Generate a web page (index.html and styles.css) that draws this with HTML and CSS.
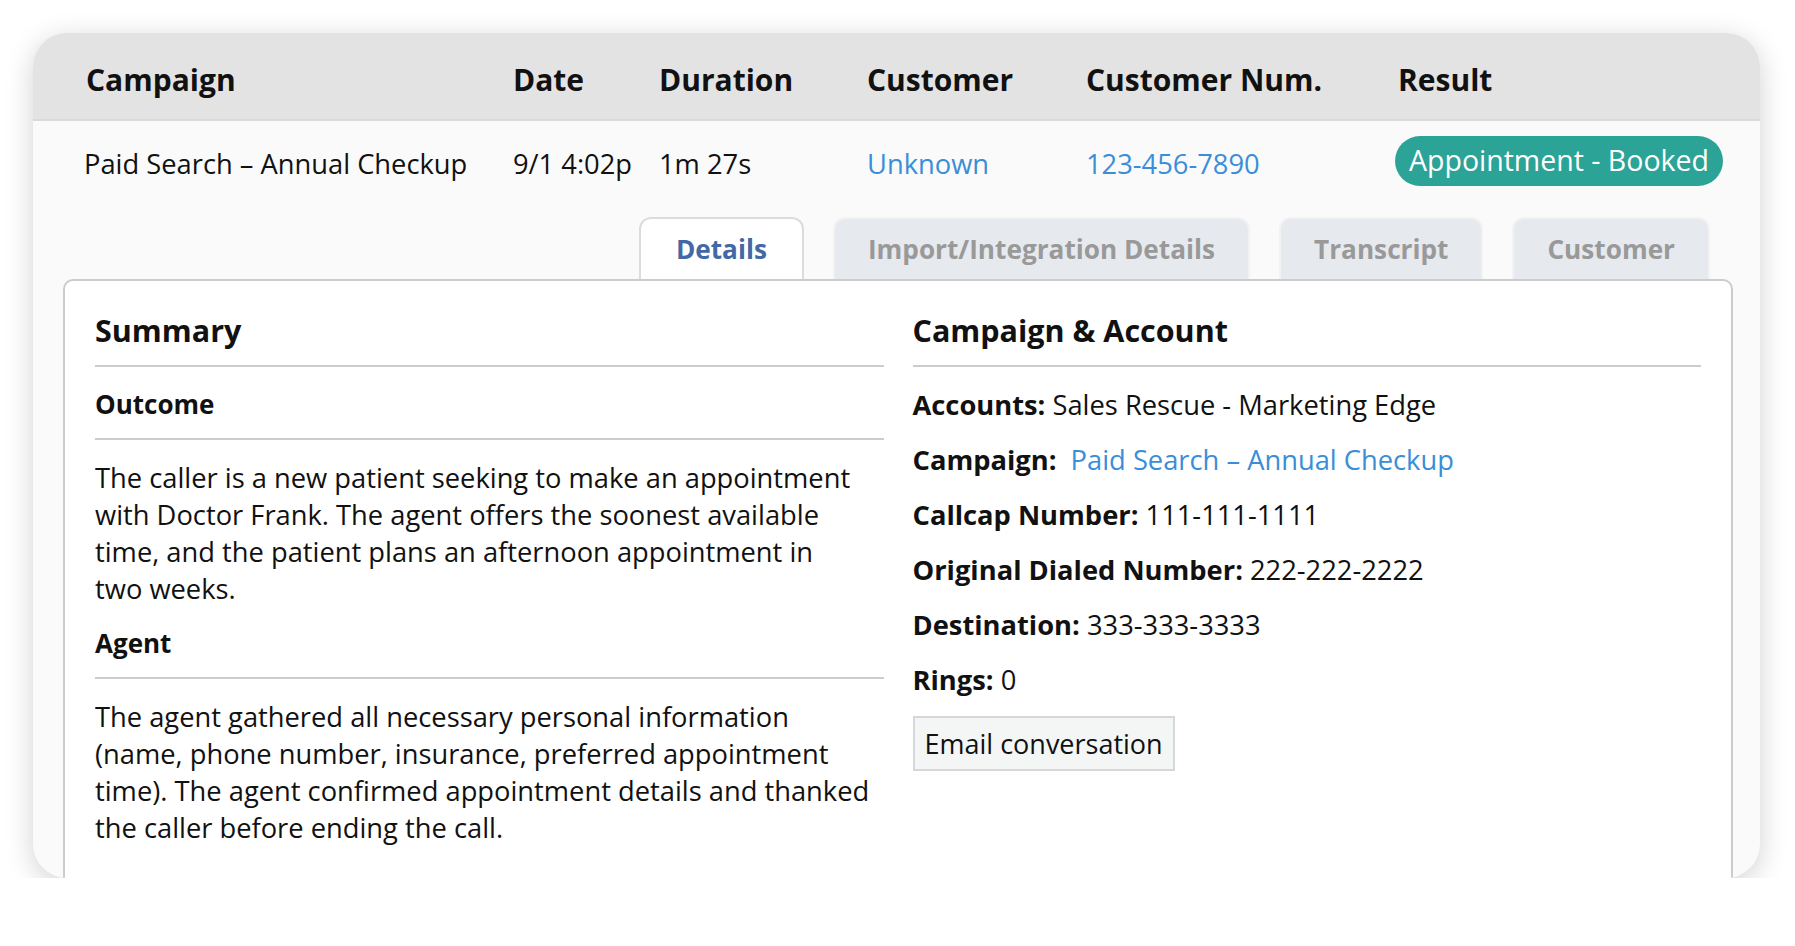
FILE: index.html
```html
<!DOCTYPE html>
<html lang="en">
	<head>
		<meta charset="UTF-8" />
		<meta name="viewport" content="width=device-width, initial-scale=1.0" />
		<title>Call Details</title>
		<link rel="stylesheet" href="styles.css">
	</head>
	<body>
		<div class="call-card">
			<div class="call-grid call-head">
				<div>Campaign</div>
				<div>Date</div>
				<div>Duration</div>
				<div>Customer</div>
				<div>Customer Num.</div>
				<div>Result</div>
			</div>
			<div class="call-grid call-row">
				<div>Paid Search &ndash; Annual Checkup</div>
				<div>9/1 4:02p</div>
				<div>1m 27s</div>
				<div><a href="#" class="call-link">Unknown</a></div>
				<div><a href="#" class="call-link">123-456-7890</a></div>
				<div><span class="result-badge">Appointment - Booked</span></div>
			</div>
			<div class="detail-tabs">
				<button class="detail-tab active-tab" type="button">Details</button>
				<button class="detail-tab" type="button">Import/Integration Details</button>
				<button class="detail-tab" type="button">Transcript</button>
				<button class="detail-tab" type="button">Customer</button>
			</div>
			<div class="detail-panel">
				<div class="detail-col">
					<h2 class="section-title">Summary</h2>
					<h3 class="sub-title">Outcome</h3>
					<p class="summary-text">The caller is a new patient seeking to make an appointment<br>
						with Doctor Frank. The agent offers the soonest available<br>
						time, and the patient plans an afternoon appointment in<br>
						two weeks.</p>
					<h3 class="sub-title">Agent</h3>
					<p class="summary-text">The agent gathered all necessary personal information<br>
						(name, phone number, insurance, preferred appointment<br>
						time). The agent confirmed appointment details and thanked<br>
						the caller before ending the call.</p>
				</div>
				<div class="detail-col">
					<h2 class="section-title">Campaign &amp; Account</h2>
					<p class="info-line"><b>Accounts:</b> Sales Rescue - Marketing Edge</p>
					<p class="info-line"><b>Campaign:</b>&nbsp; <a href="#" class="call-link">Paid Search &ndash; Annual Checkup</a></p>
					<p class="info-line"><b>Callcap Number:</b> 111-111-1111</p>
					<p class="info-line"><b>Original Dialed Number:</b> 222-222-2222</p>
					<p class="info-line"><b>Destination:</b> 333-333-3333</p>
					<p class="info-line"><b>Rings:</b> 0</p>
					<button class="email-button" type="button">Email conversation</button>
				</div>
			</div>
		</div>
	</body>
</html>
```

FILE: styles.css
```css
body {
	margin: 0;
	padding: 33px 35px 0 33px;
	background-color: #ffffff;
	font-family: "Open Sans", "Noto Sans", sans-serif;
	color: #111111;
}

.call-card {
	height: 845px;
	overflow: hidden;
	background-color: #fafafa;
	border-radius: 34px;
	box-shadow: 0 6px 28px rgba(0, 0, 0, 0.18);
}

.call-grid {
	display: grid;
	grid-template-columns: 427px 146px 208px 219px 312px 1fr;
	align-items: center;
	padding-left: 53px;
}
.call-head {
	box-sizing: border-box;
	height: 88px;
	padding-top: 6px;
	background-color: #e3e3e3;
	border-bottom: 2px solid #d9d9d9;
	font-size: 30px;
	font-weight: 700;
}
.call-row {
	padding-top: 15px;
	height: 50px;
	font-size: 27.3px;
}
.call-row > div {
	padding-top: 4px;
}
.call-row > div:first-child {
	margin-left: -2px;
}
.call-row > div:last-child {
	padding-top: 0;
}
.call-link {
	color: #3a8ed8;
	text-decoration: none;
}
.result-badge {
	display: inline-block;
	margin-left: -3px;
	padding: 0 14px;
	height: 50px;
	line-height: 48px;
	border-radius: 25px;
	background-color: #2ca397;
	color: #ffffff;
	font-size: 28.5px;
}

.detail-tabs {
	display: flex;
	justify-content: flex-end;
	gap: 29px;
	margin-top: 31px;
	padding-right: 50px;
}
.detail-tab {
	height: 62px;
	padding: 0 33px;
	border: 2px solid #f2f2f2;
	border-bottom: none;
	border-radius: 12px 12px 0 0;
	background-color: #e6e9ee;
	color: #999999;
	font-family: inherit;
	font-size: 26.2px;
	font-weight: 700;
}
.detail-tab.active-tab {
	padding: 0 35px;
	background-color: #ffffff;
	border-color: #dcdcdc;
	color: #4368a6;
}

.detail-panel {
	display: grid;
	grid-template-columns: 1fr 1fr;
	gap: 29px;
	min-height: 700px;
	margin: 0 27px 0 30px;
	padding: 29px 30px;
	background-color: #ffffff;
	border: 2px solid #cccccc;
	border-radius: 10px;
	font-size: 27.3px;
	line-height: 37px;
}
.detail-col {
	min-width: 0;
}
.section-title {
	margin: 0 0 19px;
	padding-bottom: 15px;
	border-bottom: 2px solid #cccccc;
	font-size: 30.5px;
	line-height: 40px;
}
.sub-title {
	margin: 0 0 19px;
	padding-bottom: 15px;
	border-bottom: 2px solid #cccccc;
	font-size: 26px;
	line-height: 37px;
}
.summary-text {
	margin: 0 0 18px;
	white-space: nowrap;
}
.info-line {
	margin: 0 0 18px;
}
.email-button {
	height: 55px;
	padding: 0 10px;
	background-color: #f4f6f6;
	border: 2px solid #d4d8db;
	color: #111111;
	font-family: inherit;
	font-size: 27px;
}
```
